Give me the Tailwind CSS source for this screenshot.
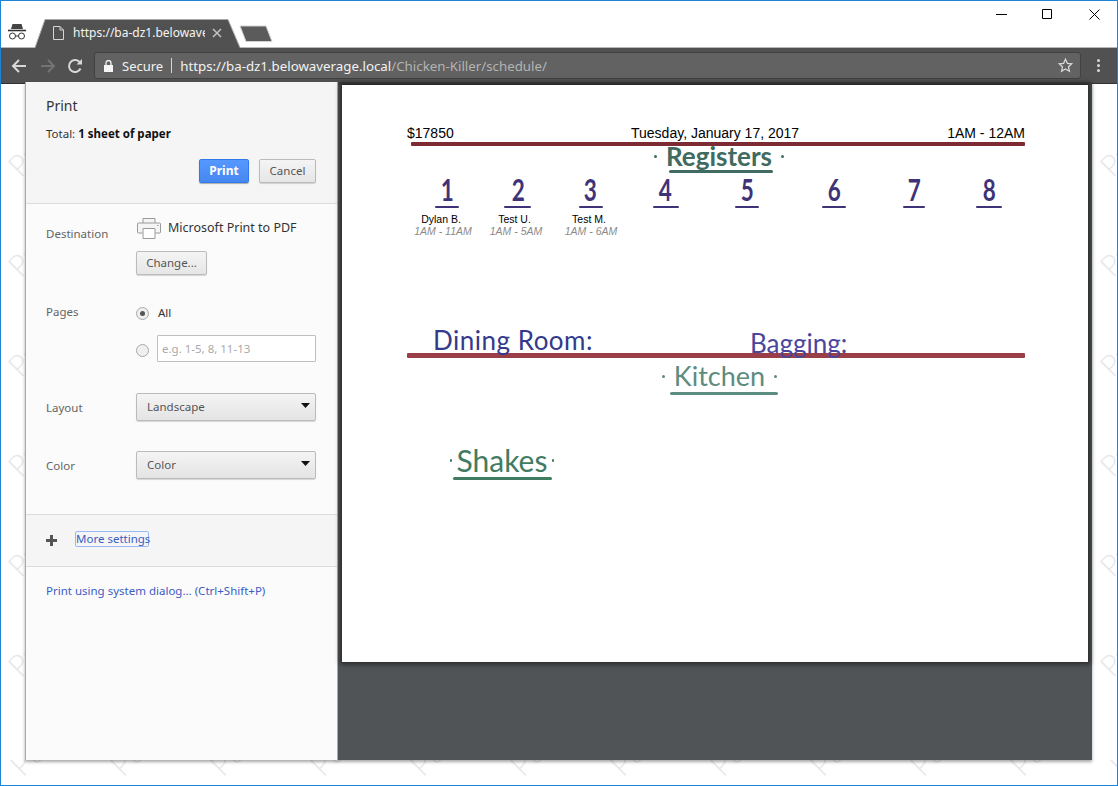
<!DOCTYPE html>
<html><head><meta charset="utf-8"><script src="https://cdn.jsdelivr.net/npm/@tailwindcss/browser@4"></script></head>
<body class="bg-white">
<div class="w-[1118px] h-[786px] border border-[#1b84d8] bg-white overflow-hidden relative flex flex-col font-['Noto_Sans',sans-serif]">
  <!-- title bar -->
  <div class="h-[46px] flex items-end shrink-0 relative z-20">
    <svg class="w-[24px] h-[20px] ml-[4px] mb-[6px]" viewBox="0 0 24 20" fill="none" stroke="#333"><path d="M6 8l1.5-5h9L18 8z" fill="#444" stroke="none"/><path d="M3 9.5h18" stroke-width="1.6"/><circle cx="7.500" cy="15" r="3"/><circle cx="16.500" cy="15" r="3"/><path d="M10.500 15h3"/></svg>
    <div class="relative w-[206px] h-[29px] ml-[6px] -mb-[1px] flex items-center text-[#f4f4f4]">
      <svg class="absolute inset-0 w-[206px] h-[29px]" viewBox="0 0 206 29"><path d="M0 29 L10 .5 H193 L205 29z" fill="#515151"/><path d="M0 28.500 L10 .5 H193 L205 28.500" fill="none" stroke="#aaa"/></svg>
      <svg class="relative ml-[18px] w-[11px] h-[14px] -mt-[1px]" viewBox="0 0 11 14" fill="none" stroke="#d5d5d5"><path d="M.5.5h6.500l3.500 3.500v9.500h-10zM7 .5v3.500h3.500"/></svg>
      <div class="relative ml-[9px] w-[132px] overflow-hidden whitespace-nowrap text-[12px] leading-[18px] -mt-[1px]">https://ba-dz1.belowaverage.local</div>
      <svg class="relative ml-[7px] w-[10px] h-[10px] -mt-[1px]" viewBox="0 0 10 10" stroke="#c4c4c4" stroke-width="1.500"><path d="M1 1l8 8M9 1l-8 8"/></svg>
    </div>
    <svg class="w-[34px] h-[18px] -ml-[2px] mb-[4px]" viewBox="0 0 34 18"><path d="M1 1h26l6 15.500H7z" fill="#5b5b5b" stroke="#d0d0d0"/></svg>
    <div class="ml-auto self-start flex items-center mt-[8px] mr-[17px]">
      <svg class="w-[11px] h-[11px] mr-[35px]" viewBox="0 0 11 11" stroke="#000"><path d="M0 5.500h11"/></svg>
      <svg class="w-[11px] h-[11px] mr-[36px]" viewBox="0 0 11 11" fill="none" stroke="#000"><path d="M.5.5h9v9h-9z"/></svg>
      <svg class="w-[11px] h-[11px]" viewBox="0 0 11 11" stroke="#000"><path d="M.5.5l10 10M10.500.5l-10 10"/></svg>
    </div>
  </div>
  <!-- toolbar -->
  <div class="h-[37px] bg-[#515151] border-t border-[#b8b8b8] border-b-[1px] border-b-[#333] flex items-center shrink-0 relative z-0">
    <svg class="w-[16px] h-[16px] ml-[10px] shrink-0" viewBox="0 0 16 16" fill="none" stroke="#d8d8d8" stroke-width="2"><path d="M15 8H2M8 2L2 8l6 6"/></svg>
    <svg class="w-[16px] h-[16px] ml-[13px] shrink-0" viewBox="0 0 16 16" fill="none" stroke="#747474" stroke-width="2"><path d="M1 8h13M8 2l6 6-6 6"/></svg>
    <svg class="w-[16px] h-[16px] ml-[11px] shrink-0" viewBox="0 0 16 16" fill="none" stroke="#d8d8d8" stroke-width="2"><path d="M13.500 10.500A6 6 0 1 1 12.300 3.800L14 5.500"/><path d="M15 1v5.500H9.500z" fill="#d8d8d8" stroke="none"/></svg>
    <div class="ml-[11px] w-[987px] h-[27px] rounded-[3px] bg-[#626262] border border-[#414141] flex items-center text-[#f2f2f2] shrink-0">
      <svg class="w-[9px] h-[12px] ml-[9px] shrink-0" viewBox="0 0 9 12" fill="#f5f5f5"><path d="M0 5h9v7H0z"/><path d="M2 5V3a2.500 2.500 0 0 1 5 0v2" fill="none" stroke="#f5f5f5" stroke-width="1.300"/></svg>
      <span class="ml-[9px] text-[13px] leading-[18px]">Secure</span>
      <span class="ml-[8px] w-px h-[15px] bg-[#d5d5d5]"></span>
      <span class="ml-[8px] text-[13.300px] leading-[18px] whitespace-nowrap">https://ba-dz1.belowaverage.local<span class="text-[#b4b4b4]">/Chicken-Killer/schedule/</span></span>
      <svg class="ml-auto mr-[7px] w-[15px] h-[15px]" viewBox="0 0 15 15" fill="none" stroke="#d8d8d8" stroke-width="1.300"><path d="M7.500 1.200l1.900 4.100 4.400.5-3.300 3 .9 4.400-3.900-2.200-3.900 2.200.9-4.400-3.300-3 4.400-.5z"/></svg>
    </div>
    <div class="ml-[16px] flex flex-col gap-[2px]"><i class="block w-[3px] h-[3px] rounded-full bg-[#d8d8d8]"></i><i class="block w-[3px] h-[3px] rounded-full bg-[#d8d8d8]"></i><i class="block w-[3px] h-[3px] rounded-full bg-[#d8d8d8]"></i></div>
  </div>
  <!-- page behind the dialog -->
  <div class="relative flex-1">
    <div class="absolute left-0 top-0 w-[24px] h-[701px] overflow-hidden text-[#e8e8e8] font-['Lato',sans-serif] font-light text-[30px] leading-[30px]">
      <div class="flex flex-col pt-[66px] gap-[70px] pl-[9px]">
        <span class="h-[30px] -rotate-45">Pu</span><span class="h-[30px] -rotate-45">Pu</span><span class="h-[30px] -rotate-45">Pu</span><span class="h-[30px] -rotate-45">Pu</span><span class="h-[30px] -rotate-45">Pu</span><span class="h-[30px] -rotate-45">Pu</span>
      </div>
    </div>
    <div class="absolute right-0 top-0 w-[24px] h-[701px] overflow-hidden text-[#e8e8e8] font-['Lato',sans-serif] font-light text-[30px] leading-[30px]">
      <div class="flex flex-col pt-[66px] gap-[70px] pl-[9px]">
        <span class="h-[30px] -rotate-45">Pu</span><span class="h-[30px] -rotate-45">Pu</span><span class="h-[30px] -rotate-45">Pu</span><span class="h-[30px] -rotate-45">Pu</span><span class="h-[30px] -rotate-45">Pu</span><span class="h-[30px] -rotate-45">Pu</span>
      </div>
    </div>
    <div class="absolute left-0 bottom-0 right-0 h-[25px] overflow-hidden text-[#e8e8e8] font-['Lato',sans-serif] font-light text-[30px] leading-[30px]">
      <div class="flex gap-[70px] pl-[9px] -mt-[16px] whitespace-nowrap">
        <span class="w-[30px] -rotate-45">Pu</span><span class="w-[30px] -rotate-45">Pu</span><span class="w-[30px] -rotate-45">Pu</span><span class="w-[30px] -rotate-45">Pu</span><span class="w-[30px] -rotate-45">Pu</span><span class="w-[30px] -rotate-45">Pu</span><span class="w-[30px] -rotate-45">Pu</span><span class="w-[30px] -rotate-45">Pu</span><span class="w-[30px] -rotate-45">Pu</span><span class="w-[30px] -rotate-45">Pu</span><span class="w-[30px] -rotate-45">Pu</span><span class="w-[30px] -rotate-45">Pu</span>
      </div>
    </div>
    <!-- dialog -->
    <div class="relative z-10 flex ml-[24px] -mt-[2px] w-[1067px] h-[678px] shadow-[0_2px_3px_rgba(0,0,0,0.35)]">
      <div class="w-[313px] shrink-0 bg-[#fbfbfb] border-l border-r border-l-[#aaa] border-r-[#aaa] text-[11.500px] text-[#646464]">
        <div class="h-[122px] bg-[#f5f5f5] border-b border-[#dcdcdc] pl-[20px] pr-[21px] pt-[14px]">
          <div class="text-[14px] leading-[20px] text-[#333]">Print</div>
          <div class="mt-[10px] text-[11.500px] leading-[16px] text-[#333]">Total: <b class="text-[#111]">1 sheet of paper</b></div>
          <div class="mt-[17px] flex justify-end gap-[10px]">
            <div class="w-[50px] h-[24px] rounded-[2px] border border-[#3079ed] bg-linear-to-b from-[#5598ff] to-[#4787f0] text-white font-bold text-[12px] leading-[22px] text-center shadow-[0_1px_1px_rgba(0,0,0,0.3)]">Print</div>
            <div class="w-[57px] h-[24px] rounded-[2px] border border-[#bbb] bg-linear-to-b from-[#f4f4f4] to-[#e6e6e6] text-[#555] text-[11.500px] leading-[22px] text-center shadow-[0_1px_1px_rgba(0,0,0,0.15)]">Cancel</div>
          </div>
        </div>
        <div class="flex pl-[20px] pt-[13px]">
          <div class="w-[90px] pt-[8px] leading-[18px]">Destination</div>
          <div>
            <div class="flex items-center h-[22px]">
              <svg class="w-[24px] h-[21px] ml-[1px]" viewBox="0 0 24 21" fill="#f4f4f4" stroke="#9a9a9a"><path d="M6 5V.5h12V5"/><path d="M5.500 15H1.500a1 1 0 0 1-1-1V6a1 1 0 0 1 1-1h21a1 1 0 0 1 1 1v8a1 1 0 0 1-1 1h-4"/><path d="M6 10.500h12v10H6z" fill="#fff"/><path d="M20 7.500h1.500" /></svg>
              <span class="ml-[7px] text-[12.500px] text-[#333] leading-[18px]">Microsoft Print to PDF</span>
            </div>
            <div class="mt-[12px] w-[71px] h-[24px] rounded-[2px] border border-[#bbb] bg-linear-to-b from-[#f4f4f4] to-[#e6e6e6] text-[#555] leading-[22px] text-center shadow-[0_1px_1px_rgba(0,0,0,0.15)]">Change...</div>
          </div>
        </div>
        <div class="flex pl-[20px] mt-[29px]">
          <div class="w-[90px] leading-[18px] -mt-[1px]">Pages</div>
          <div>
            <div class="flex items-center h-[18px]">
              <span class="w-[13px] h-[13px] rounded-full border border-[#a8a8a8] bg-[#efefef] flex items-center justify-center"><i class="block w-[5px] h-[5px] rounded-full bg-[#555]"></i></span>
              <span class="ml-[9px] text-[#333]">All</span>
            </div>
            <div class="flex items-center mt-[13px]">
              <span class="w-[13px] h-[13px] rounded-full border border-[#a8a8a8] bg-[#efefef] mt-[4px]"></span>
              <span class="ml-[8px] w-[159px] h-[27px] border border-[#bfbfbf] rounded-[1px] bg-white text-[#aaa] pl-[4px] leading-[25px]">e.g. 1-5, 8, 11-13</span>
            </div>
          </div>
        </div>
        <div class="flex pl-[20px] mt-[31px] items-center">
          <div class="w-[90px] leading-[18px] mt-[2px]">Layout</div>
          <div class="w-[180px] h-[28px] rounded-[2px] border border-[#bbb] bg-linear-to-b from-[#f4f4f4] to-[#e4e4e4] text-[#555] flex items-center pl-[10px] shadow-[0_1px_1px_rgba(0,0,0,0.15)]">Landscape<svg class="ml-auto mr-[5px] w-[9px] h-[5px] -mt-[3px]" viewBox="0 0 9 5"><path d="M0 0h9L4.500 5z" fill="#111"/></svg></div>
        </div>
        <div class="flex pl-[20px] mt-[30px] items-center">
          <div class="w-[90px] leading-[18px] mt-[2px]">Color</div>
          <div class="w-[180px] h-[28px] rounded-[2px] border border-[#bbb] bg-linear-to-b from-[#f4f4f4] to-[#e4e4e4] text-[#555] flex items-center pl-[10px] shadow-[0_1px_1px_rgba(0,0,0,0.15)]">Color<svg class="ml-auto mr-[5px] w-[9px] h-[5px] -mt-[3px]" viewBox="0 0 9 5"><path d="M0 0h9L4.500 5z" fill="#111"/></svg></div>
        </div>
        <div class="mt-[35px] h-[53px] bg-[#f5f5f5] border-y border-[#dcdcdc] flex items-center pl-[20px]">
          <svg class="w-[11px] h-[11px]" viewBox="0 0 11 11"><path d="M4 0h3v4h4v3H7v4H4V7H0V4h4z" fill="#555"/></svg>
          <span class="ml-[18px] -mt-[3px] h-[16px] leading-[13px] border border-[#9ab8f8] rounded-[2px] text-[#3b5cc4] w-[74px] text-center whitespace-nowrap">More settings</span>
        </div>
        <div class="pl-[20px] mt-[15px] text-[#3b5cc4] leading-[18px] whitespace-nowrap">Print using system dialog... (Ctrl+Shift+P)</div>
      </div>
      <div class="flex-1 bg-[#505456] border-t-[3px] border-[#444] pl-[4px] pr-[4px]">
        <div class="w-[746px] h-[577px] bg-white shadow-[0_0_5px_2px_rgba(0,0,0,0.55)] pl-[65px] pr-[63px] pt-[40px] font-['Liberation_Sans',sans-serif] text-black">
          <div class="flex text-[14px] leading-[16px]"><span class="w-[224px]">$17850</span><span>Tuesday, January 17, 2017</span><span class="ml-auto">1AM - 12AM</span></div>
          <div class="ml-[4px] h-[4px] mt-[1px] rounded-[1px] bg-[#7c2b34]"></div>
          <div class="flex flex-col items-center font-['Lato',sans-serif] text-[#3f6b60]">
            <div class="flex items-center gap-[9px] ml-[6px] h-[22px] -mt-[1px]"><i class="w-[3px] h-[3px] rounded-full bg-[#3f6b60]"></i><span class="text-[26px] leading-[22px] font-bold">Registers</span><i class="w-[3px] h-[3px] rounded-full bg-[#3f6b60]"></i></div>
            <div class="h-[3px] w-[104px] ml-[10px] mt-[3px] rounded-full bg-[#3f6b60]"></div>
          </div>
          <div class="flex mt-[5px] font-['Lato',sans-serif] font-bold text-[25px] leading-[28px] text-[#3e3378] text-center">
            <div class="w-[72px] ml-[4px]"><span class="inline-block scale-x-90 scale-y-125 origin-bottom">1</span><div class="w-[24px] h-[2px] mx-auto rounded-full bg-[#3e3378]"></div></div>
            <div class="w-[72px] -ml-[1px]"><span class="inline-block scale-x-90 scale-y-125 origin-bottom">2</span><div class="w-[27px] h-[2px] mx-auto rounded-full bg-[#3e3378]"></div></div>
            <div class="w-[72px] ml-[1px]"><span class="inline-block scale-x-90 scale-y-125 origin-bottom">3</span><div class="w-[24px] h-[2px] mx-auto rounded-full bg-[#3e3378]"></div></div>
            <div class="w-[72px] ml-[3px]"><span class="inline-block scale-x-90 scale-y-125 origin-bottom">4</span><div class="w-[26px] h-[2px] mx-auto rounded-full bg-[#3e3378]"></div></div>
            <div class="w-[72px] ml-[10px]"><span class="inline-block scale-x-90 scale-y-125 origin-bottom">5</span><div class="w-[24px] h-[2px] mx-auto rounded-full bg-[#3e3378]"></div></div>
            <div class="w-[72px] ml-[15px]"><span class="inline-block scale-x-90 scale-y-125 origin-bottom">6</span><div class="w-[24px] h-[2px] mx-auto rounded-full bg-[#3e3378]"></div></div>
            <div class="w-[72px] ml-[8px]"><span class="inline-block scale-x-90 scale-y-125 origin-bottom">7</span><div class="w-[22px] h-[2px] mx-auto rounded-full bg-[#3e3378]"></div></div>
            <div class="w-[72px] ml-[3px]"><span class="inline-block scale-x-90 scale-y-125 origin-bottom">8</span><div class="w-[26px] h-[2px] mx-auto rounded-full bg-[#3e3378]"></div></div>
          </div>
          <div class="flex mt-[5px] text-center text-[10.500px] leading-[12px]">
            <div class="w-[72px]"><div class="-ml-[4px]">Dylan B.</div><div class="italic text-[#8a8a8a]">1AM - 11AM</div></div>
            <div class="w-[72px] ml-[1px]"><div class="-ml-[3px]">Test U.</div><div class="italic text-[#8a8a8a]">1AM - 5AM</div></div>
            <div class="w-[72px] ml-[3px]"><div class="-ml-[4px]">Test M.</div><div class="italic text-[#8a8a8a]">1AM - 6AM</div></div>
          </div>
          <div class="flex mt-[89px] h-[28px] font-['Lato',sans-serif] text-[26px] leading-[28px] text-[#333a8c]">
            <span class="ml-[26px] tracking-[0.5px] whitespace-nowrap">Dining Room:</span><span class="ml-[157px] mt-[3px] text-[#4a469c]">Bagging:</span>
          </div>
          <div class="h-[5px] -mt-[1px] rounded-[1px] bg-[#9a3f47]"></div>
          <div class="flex flex-col items-center font-['Lato',sans-serif] text-[#5d8c80]">
            <div class="flex items-center gap-[9px] h-[26px] mt-[5px] ml-[7px]"><i class="w-[3px] h-[3px] rounded-full bg-[#5d8c80]"></i><span class="text-[27px] leading-[26px]">Kitchen</span><i class="w-[3px] h-[3px] rounded-full bg-[#5d8c80]"></i></div>
            <div class="h-[3px] w-[108px] ml-[16px] mt-[3px] rounded-full bg-[#5d8c80]"></div>
          </div>
          <div class="ml-[43px] w-[104px] font-['Lato',sans-serif] text-[#3f7c62] mt-[52px]">
            <div class="flex items-center gap-[5px] h-[26px]"><i class="w-[3px] h-[3px] rounded-full bg-[#3f7c62]"></i><span class="text-[30px] leading-[26px]">Shakes</span><i class="w-[3px] h-[3px] rounded-full bg-[#3f7c62]"></i></div>
            <div class="h-[3px] w-[99px] ml-[3px] mt-[4px] rounded-full bg-[#3f7c62]"></div>
          </div>
        </div>
      </div>
    </div>
  </div>
</div>
</body></html>
